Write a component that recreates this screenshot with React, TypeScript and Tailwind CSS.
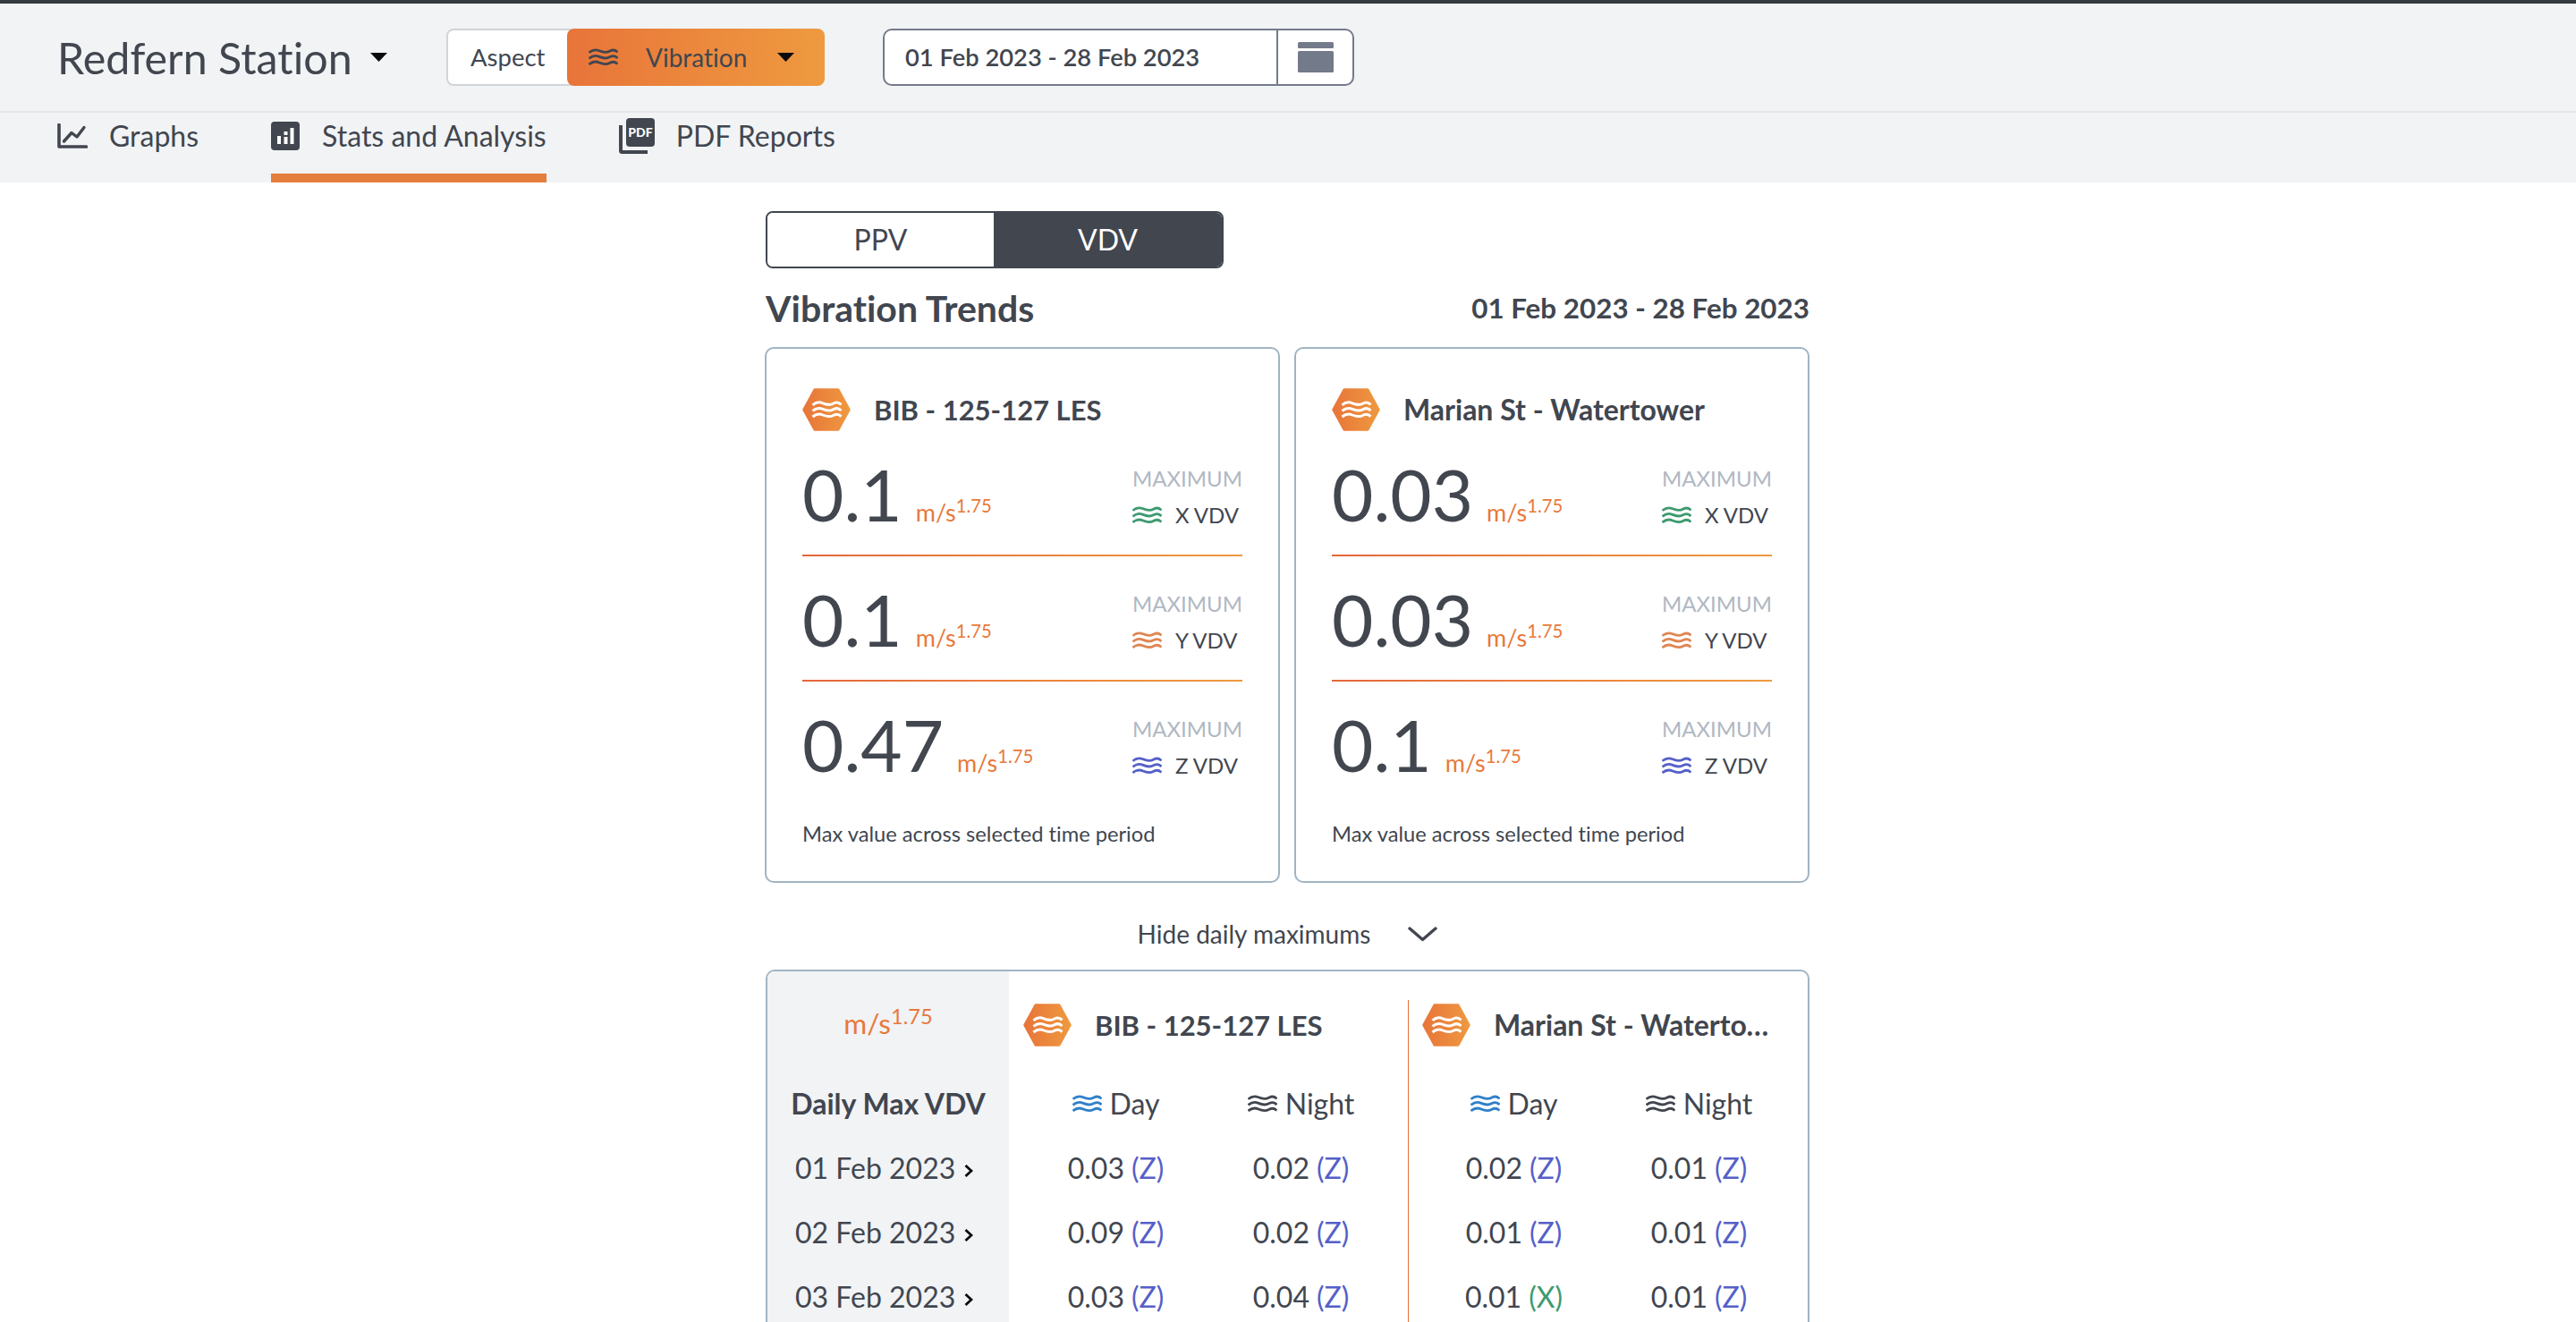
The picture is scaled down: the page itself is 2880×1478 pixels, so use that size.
import { useId } from "react"

const ink = "#41464f"
const wave = "M0.5 4.8C4 1.8 8 1 12 2.8C16 4.6 20 5.2 24 3C27 1.4 30 1.8 32.5 4.4"

function Waves({ color, className = "w-[33px] h-[20px]" }: { color: string; className?: string }) {
  return (
    <svg viewBox="0 0 33 20" className={className} fill="none" stroke={color} strokeWidth="2.8">
      {[0, 6.6, 13.2].map((y) => (
        <path key={y} transform={`translate(0 ${y})`} d={wave} />
      ))}
    </svg>
  )
}

function Hex() {
  const id = useId()
  return (
    <svg viewBox="0 0 54 48" className="w-[54px] h-[48px] shrink-0">
      <defs>
        <linearGradient id={id} gradientUnits="userSpaceOnUse" x1="0" x2="54" y1="0" y2="0">
          <stop offset="0" stopColor="#e8743a" />
          <stop offset="1" stopColor="#ee9a3f" />
        </linearGradient>
      </defs>
      <polygon points="14,2 40,2 52,24 40,46 14,46 2,24" fill={`url(#${id})`} stroke={`url(#${id})`} strokeWidth="3.5" strokeLinejoin="round" />
      <g transform="translate(11 14)" fill="none" stroke="#fff" strokeWidth="3">
        {[0, 6.6, 13.2].map((y) => (
          <path key={y} transform={`translate(0 ${y})`} d={wave} />
        ))}
      </g>
    </svg>
  )
}

function Caret() {
  return (
    <svg viewBox="0 0 19 10" className="w-[19px] h-[10px] shrink-0">
      <polygon points="0,0 19,0 9.5,10" fill="#0b0b0f" />
    </svg>
  )
}

function Unit({ big }: { big?: boolean }) {
  return (
    <span className={big ? "text-[31.5px] text-[#e8793a]" : "text-[27px] text-[#e8793a]"}>
      m/s<sup>1.75</sup>
    </span>
  )
}

const cards = [
  {
    name: "BIB - 125-127 LES",
    nameClass: "text-[31px] font-bold",
    rows: [
      { value: "0.1", axis: "X VDV", color: "#3d9a6f" },
      { value: "0.1", axis: "Y VDV", color: "#e08552" },
      { value: "0.47", axis: "Z VDV", color: "#5560c8" },
    ],
  },
  {
    name: "Marian St - Watertower",
    nameClass: "text-[32px] font-bold",
    rows: [
      { value: "0.03", axis: "X VDV", color: "#3d9a6f" },
      { value: "0.03", axis: "Y VDV", color: "#e08552" },
      { value: "0.1", axis: "Z VDV", color: "#5560c8" },
    ],
  },
]

const dates = ["01 Feb 2023", "02 Feb 2023", "03 Feb 2023"]

const daily = [
  {
    name: "BIB - 125-127 LES",
    rows: [
      [["0.03", "Z"], ["0.02", "Z"]],
      [["0.09", "Z"], ["0.02", "Z"]],
      [["0.03", "Z"], ["0.04", "Z"]],
    ],
  },
  {
    name: "Marian St - Watertower",
    rows: [
      [["0.02", "Z"], ["0.01", "Z"]],
      [["0.01", "Z"], ["0.01", "Z"]],
      [["0.01", "X"], ["0.01", "Z"]],
    ],
  },
]

function Card({ card }: { card: (typeof cards)[number] }) {
  return (
    <div className="h-[599px] border-2 border-[#a1b4c3] rounded-[10px] pl-[40px] pr-[41px] pt-[44px]">
      <div className="flex items-center gap-[26px] h-[48px]">
        <Hex />
        <span className={card.nameClass}>{card.name}</span>
      </div>
      {card.rows.map((row, i) => (
        <div key={row.axis}>
          <div className="flex justify-between h-[138px]">
            <div className="flex items-baseline gap-[15px] pt-[30px]">
              <span className="text-[80px] leading-[80px]">{row.value}</span>
              <Unit />
            </div>
            <div className="w-[122px] pt-[38px]">
              <div className="text-[24px] leading-[30px] text-[#b1b8c2]">MAXIMUM</div>
              <div className="flex items-center gap-[15px] mt-[11px] h-[30px] text-[24px]">
                <Waves color={row.color} />
                <span>{row.axis}</span>
              </div>
            </div>
          </div>
          {i < 2 && <div className="h-[2px] -mr-[1px] bg-gradient-to-r from-[#e4663a] to-[#ee9a3f]" />}
        </div>
      ))}
      <p className="text-[23.7px] leading-[30px] mt-[17px]">Max value across selected time period</p>
    </div>
  )
}

export default function App() {
  return (
    <div className="h-[1478px] overflow-hidden bg-white text-[#41464f] font-['Lato',sans-serif] [font-variant-ligatures:none]">
      <div className="h-[4px] bg-[#353a40]" />

      {/* Header */}
      <div className="bg-[#f1f3f5]">
        <div className="flex items-center h-[120px] pl-[64px] border-b-2 border-[#e5e7ea] box-content">
          <div className="flex items-center gap-[20px] w-[435px]">
            <span className="text-[48.4px]">Redfern Station</span>
            <Caret />
          </div>
          <div className="flex h-[64px] w-[423px]">
            <div className="flex items-center w-[140px] pl-[25px] bg-white border-2 border-[#d0d5da] rounded-l-[8px] text-[27.5px]">
              Aspect
            </div>
            <div className="flex items-center w-[288px] -ml-[5px] pl-[24px] rounded-[8px] bg-gradient-to-r from-[#e8743a] to-[#ee9a3f] text-[28px]">
              <Waves color={ink} />
              <span className="ml-[31px]">Vibration</span>
              <span className="ml-[34px]"><Caret /></span>
            </div>
          </div>
          <div className="flex h-[64px] w-[527px] ml-[65px] bg-white border-2 border-[#737a8a] rounded-[10px]">
            <div className="flex items-center flex-1 pl-[23px] text-[27.3px] font-semibold">01 Feb 2023 - 28 Feb 2023</div>
            <div className="flex items-center justify-center w-[85px] border-l-2 border-[#737a8a]">
              <svg viewBox="0 0 40 34" className="w-[40px] h-[34px]" fill="#737a8a">
                <rect x="0" y="0" width="40" height="7" rx="1.5" />
                <rect x="0" y="10" width="40" height="24" rx="1.5" />
              </svg>
            </div>
          </div>
        </div>

        {/* Tabs */}
        <div className="flex h-[78px] pl-[64px] gap-[81px]">
          <div className="flex items-center h-[40px] mt-[6px] text-[32px]">
            <svg viewBox="0 0 34 28" className="w-[34px] h-[28px] mr-[24px]" fill="none" stroke={ink} strokeLinecap="round" strokeLinejoin="round">
              <path d="M2 1.5V26H32.5" strokeWidth="3.6" />
              <path d="M7.5 20L16 10.5L22 15L30 4.5" strokeWidth="3.4" />
            </svg>
            Graphs
          </div>
          <div className="flex flex-col">
            <div className="flex items-center h-[40px] mt-[6px] text-[32px]">
              <svg viewBox="0 0 32 32" className="w-[32px] h-[32px] mr-[25px]">
                <rect width="32" height="32" rx="4" fill={ink} />
                <g fill="#fff">
                  <rect x="7" y="16" width="4" height="9" />
                  <rect x="14.5" y="17" width="4" height="8" />
                  <rect x="14.5" y="11" width="4" height="4" />
                  <rect x="21.5" y="7" width="4" height="18" />
                </g>
              </svg>
              Stats and Analysis
            </div>
            <div className="h-[10px] mt-auto bg-[#e47f3e]" />
          </div>
          <div className="flex items-center h-[40px] mt-[6px] text-[32px]">
            <svg viewBox="0 0 40 40" className="w-[40px] h-[40px] mr-[24px]">
              <path d="M2 8V36.5Q2 38 3.5 38H32" fill="none" stroke={ink} strokeWidth="4" />
              <rect x="8" y="0" width="32" height="32" rx="4" fill={ink} />
              <text x="24" y="21" textAnchor="middle" fontSize="14" fontWeight="900" fill="#fff" fontFamily="Lato, sans-serif">PDF</text>
            </svg>
            PDF Reports
          </div>
        </div>
      </div>

      {/* Content */}
      <div className="w-[1167px] ml-[856px] pt-[32px]">
        <div className="flex w-[512px] h-[64px] border-2 border-[#41464f] rounded-[8px] overflow-hidden text-[32px]">
          <div className="flex items-center justify-center w-[253px] bg-white">PPV</div>
          <div className="flex items-center justify-center flex-1 bg-[#41464f] text-white">VDV</div>
        </div>

        <div className="flex items-center justify-between h-[38px] mt-[26px] mb-[24px]">
          <span className="text-[41px] font-bold">Vibration Trends</span>
          <span className="text-[31.4px] font-bold">01 Feb 2023 - 28 Feb 2023</span>
        </div>

        <div className="grid grid-cols-2 gap-[16px] -ml-[1px]">
          {cards.map((card) => (
            <Card key={card.name} card={card} />
          ))}
        </div>

        <div className="flex items-center justify-center gap-[42px] h-[97px] pt-[17px] text-[28px]">
          <span>Hide daily maximums</span>
          <svg viewBox="0 0 33 18" className="w-[33px] h-[18px]" fill="none" stroke={ink} strokeWidth="3.4" strokeLinecap="round" strokeLinejoin="round">
            <path d="M2 3L16.5 15.5L31 3" />
          </svg>
        </div>

        {/* Daily maximums */}
        <div className="flex h-[500px] border-2 border-[#a1b4c3] rounded-[10px] overflow-hidden text-[32px]">
          <div className="w-[270px] shrink-0 bg-[#f1f3f5]">
            <div className="flex items-center justify-center h-[112px] pt-[6px]">
              <Unit big />
            </div>
            <div className="flex items-center justify-center h-[72px] font-bold">Daily Max VDV</div>
            {dates.map((date) => (
              <div key={date} className="flex items-center h-[72px] pl-[31px] gap-[10px]">
                {date}
                <svg viewBox="0 0 10 16" className="w-[10px] h-[16px] mt-[6px]" fill="none" stroke="#0b0b0f" strokeWidth="2.8">
                  <path d="M1.5 2L8 8L1.5 14" />
                </svg>
              </div>
            ))}
          </div>

          {daily.map((site, s) => (
            <div key={site.name} className={s === 0 ? "w-[446px] mt-[32px] pl-[16px]" : "w-[445px] mt-[32px] pl-[14px] border-l-[1.5px] border-[#e4703f]"}>
              <div className={s === 0 ? "flex gap-[26px] h-[80px] pt-[4px]" : "flex gap-[26px] h-[80px] pt-[4px] pl-[1px]"}>
                <Hex />
                <span className={s === 0 ? "h-[48px] leading-[48px] w-[310px] truncate text-[31px] font-bold" : "h-[48px] leading-[48px] w-[310px] truncate text-[32px] font-bold"}>{site.name}</span>
              </div>
              <div className="grid grid-cols-[207px_207px]">
                <div className="flex items-center justify-center h-[72px] gap-[9px]">
                  <Waves color="#2f80c9" />
                  Day
                </div>
                <div className="flex items-center justify-center h-[72px] gap-[9px]">
                  <Waves color="#41464f" />
                  Night
                </div>
                {site.rows.map((row, r) =>
                  row.map(([value, axis], i) => (
                    <div key={`${r}-${i}`} className="flex items-center justify-center h-[72px]">
                      {value}
                      <span className={axis === "X" ? "ml-[8px] text-[#3d9a6f]" : "ml-[8px] text-[#5560c8]"}>({axis})</span>
                    </div>
                  ))
                )}
              </div>
            </div>
          ))}
        </div>
      </div>
    </div>
  )
}
